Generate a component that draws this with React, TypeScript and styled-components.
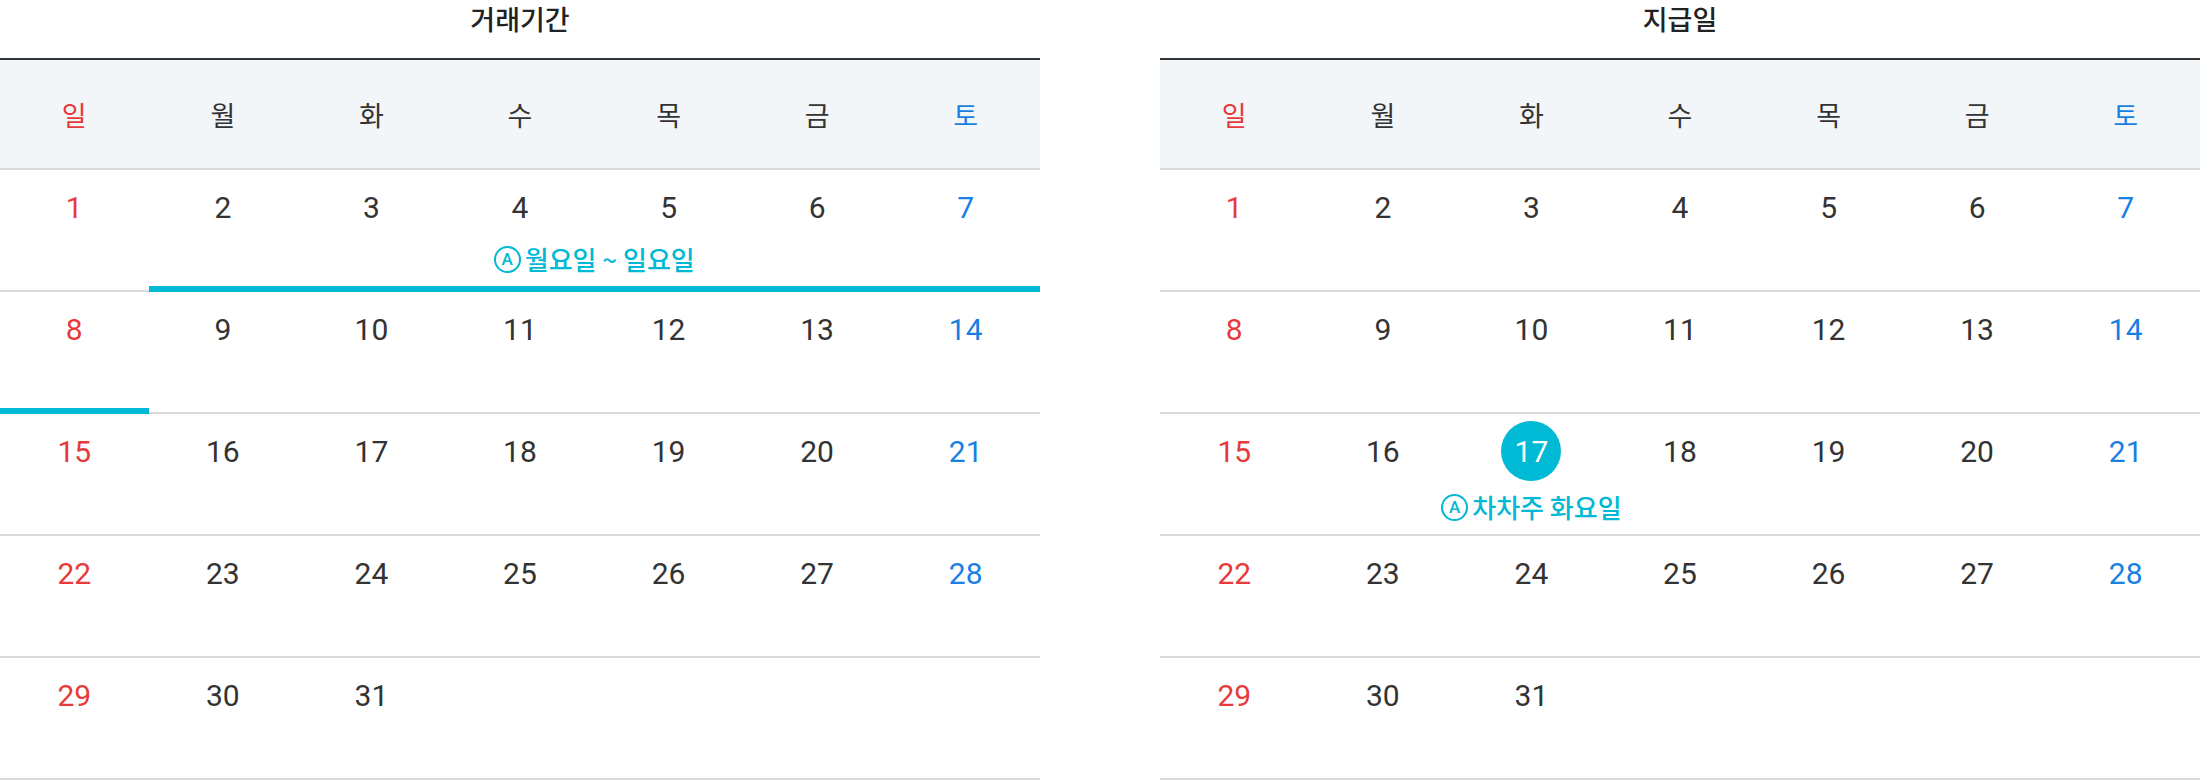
import React from "react";
import styled, { createGlobalStyle } from "styled-components";

const GlobalStyle = createGlobalStyle`
  html, body { margin: 0; padding: 0; background: #fff; }
  body { font-family: Roboto, "Noto Sans CJK KR", "Noto Sans", sans-serif; color: #333; }
`;

const CYAN = "#00b9d4";
const RED = "#e83a3a";
const BLUE = "#1a7fe3";

const Page = styled.div`
  display: grid;
  grid-template-columns: 1040px 1040px;
  column-gap: 120px;
  width: 2200px;
`;

const Calendar = styled.section`
  display: flex;
  flex-direction: column;
`;

const Title = styled.h2`
  margin: 0;
  height: 58px;
  font-size: 27px;
  line-height: 38px;
  font-weight: 500;
  text-align: center;
  color: #222;
  font-family: "Noto Sans CJK KR", sans-serif;
`;

const Header = styled.div`
  display: grid;
  grid-template-columns: repeat(7, 1fr);
  height: 108px;
  background: #f2f6f9;
  border-top: 2px solid #333;
  border-bottom: 2px solid #d9d9d9;
  align-items: center;
`;

type Tone = "sun" | "sat" | "normal";

const toneColor = (t: Tone) => (t === "sun" ? RED : t === "sat" ? BLUE : "#333");

const HeadCell = styled.div<{ $tone: Tone }>`
  text-align: center;
  font-size: 27px;
  font-family: "Noto Sans CJK KR", sans-serif;
  color: ${(p) => toneColor(p.$tone)};
`;

const WeekRow = styled.div`
  display: grid;
  grid-template-columns: repeat(7, 1fr);
  grid-template-rows: 120px 2px;
`;

const Cell = styled.div<{ $col: number }>`
  grid-row: 1;
  grid-column: ${(p) => p.$col};
  display: flex;
  flex-direction: column;
  align-items: center;
  min-width: 0;
`;

const DayNum = styled.div<{ $tone: Tone; $selected?: boolean }>`
  margin-top: 7px;
  width: 60px;
  height: 60px;
  border-radius: 50%;
  display: flex;
  align-items: center;
  justify-content: center;
  font-size: 30px;
  font-family: Roboto, sans-serif;
  background: ${(p) => (p.$selected ? CYAN : "transparent")};
  color: ${(p) => (p.$selected ? "#fff" : toneColor(p.$tone))};
`;

const Note = styled.div`
  display: flex;
  align-items: center;
  gap: 4px;
  white-space: nowrap;
  color: ${CYAN};
  font-size: 26px;
  line-height: 30px;
  font-weight: 500;
  font-family: "Noto Sans CJK KR", sans-serif;
`;

const CellNote = styled(Note)`
  margin-top: 11px;
`;

const SpanNote = styled(Note)<{ $from: number; $to: number }>`
  grid-row: 1;
  grid-column: ${(p) => p.$from} / ${(p) => p.$to};
  align-self: start;
  justify-self: center;
  margin-top: 74px;
`;

const Badge = styled.span`
  width: 27px;
  height: 27px;
  border: 2px solid ${CYAN};
  border-radius: 50%;
  box-sizing: border-box;
  display: inline-flex;
  align-items: center;
  justify-content: center;
  font-size: 17px;
  line-height: 1;
  font-weight: 500;
  font-family: Roboto, sans-serif;
`;

const Line = styled.div`
  grid-row: 2;
  grid-column: 1 / -1;
  background: #d9d9d9;
`;

const Bar = styled.div<{ $from: number; $to: number }>`
  grid-row: 1 / 3;
  grid-column: ${(p) => p.$from} / ${(p) => p.$to};
  align-self: end;
  height: 6px;
  background: ${CYAN};
`;

const DAYS = ["일", "월", "화", "수", "목", "금", "토"];

const weeks: (number | null)[][] = [
  [1, 2, 3, 4, 5, 6, 7],
  [8, 9, 10, 11, 12, 13, 14],
  [15, 16, 17, 18, 19, 20, 21],
  [22, 23, 24, 25, 26, 27, 28],
  [29, 30, 31, null, null, null, null],
];

const toneOf = (i: number): Tone => (i === 0 ? "sun" : i === 6 ? "sat" : "normal");

type Props = {
  title: string;
  selected?: number;
  selectedNote?: string;
  range?: boolean;
};

function Month({ title, selected, selectedNote, range }: Props) {
  return (
    <Calendar>
      <Title>{title}</Title>
      <Header>
        {DAYS.map((d, i) => (
          <HeadCell key={d} $tone={toneOf(i)}>
            {d}
          </HeadCell>
        ))}
      </Header>
      {weeks.map((w, wi) => (
        <WeekRow key={wi}>
          {w.map((n, i) => (
            <Cell key={i} $col={i + 1}>
              {n !== null && (
                <DayNum $tone={toneOf(i)} $selected={n === selected}>
                  {n}
                </DayNum>
              )}
              {n !== null && n === selected && selectedNote && (
                <CellNote>
                  <Badge>A</Badge>
                  {selectedNote}
                </CellNote>
              )}
            </Cell>
          ))}
          <Line />
          {range && wi === 0 && (
            <>
              <SpanNote $from={2} $to={8}>
                <Badge>A</Badge>
                월요일 ~ 일요일
              </SpanNote>
              <Bar $from={2} $to={8} />
            </>
          )}
          {range && wi === 1 && <Bar $from={1} $to={2} />}
        </WeekRow>
      ))}
    </Calendar>
  );
}

export default function App() {
  return (
    <>
      <GlobalStyle />
      <Page>
        <Month title="거래기간" range />
        <Month title="지급일" selected={17} selectedNote="차차주 화요일" />
      </Page>
    </>
  );
}
